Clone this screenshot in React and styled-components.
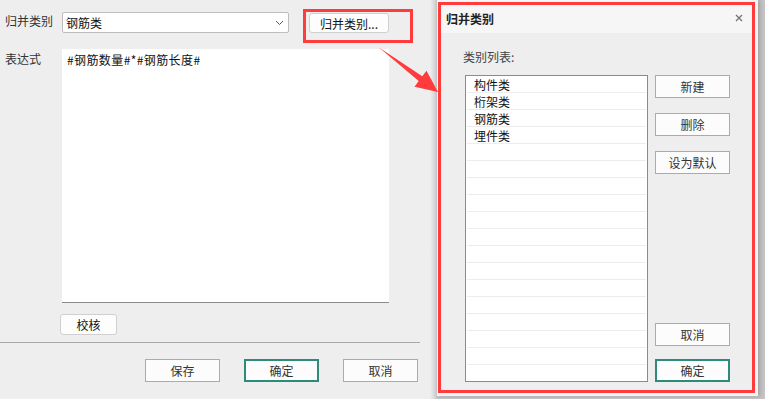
import styled, { createGlobalStyle } from "styled-components";

const GlobalStyle = createGlobalStyle`
  html, body {
    margin: 0;
    padding: 0;
    background: #eeeeee;
  }
  * {
    box-sizing: border-box;
  }
`;

const font = `"Noto Sans CJK SC", "Noto Sans", "Liberation Sans", sans-serif`;

const Page = styled.div`
  position: relative;
  width: 765px;
  height: 399px;
  overflow: hidden;
  display: flex;
  background: #eeeeee;
  font-family: ${font};
  font-size: 12px;
  color: #222;
`;

// Formulario da esquerda
const LeftPanel = styled.div`
  width: 430px;
  flex-shrink: 0;
  display: flex;
  flex-direction: column;
  padding-top: 9px;
`;

const TopRow = styled.div`
  display: flex;
  align-items: flex-start;
`;

const FieldLabel = styled.div`
  width: 62px;
  padding-left: 5px;
  line-height: 16px;
  margin-top: ${(p) => p.$top || 0}px;
  color: #333;
`;

const Select = styled.div`
  width: 227px;
  height: 21px;
  margin-top: 3px;
  background: #fff;
  border: 1px solid #bdbdbd;
  border-radius: 2px;
  display: flex;
  align-items: center;
  justify-content: space-between;
  padding: 0 4px 0 3px;
  color: #111;
`;

const Highlight = styled.div`
  border: 3px solid #ff3b3b;
  padding: ${(p) => p.$pad};
  margin-left: ${(p) => p.$left || 0}px;
`;

const SmallButton = styled.div`
  width: ${(p) => p.$w}px;
  height: ${(p) => p.$h}px;
  background: #fdfdfd;
  border: 1px solid #cfcfcf;
  border-radius: 3px;
  display: flex;
  align-items: center;
  justify-content: center;
  color: #111;
`;

const ExprRow = styled.div`
  display: flex;
  align-items: flex-start;
  margin-top: 6px;
`;

const ExprBox = styled.div`
  width: 327px;
  height: 254px;
  background: #fff;
  border-bottom: 1px solid #8a8a8a;
  padding: 3px 5px;
  line-height: 16px;
  letter-spacing: 0.4px;
  color: #111;
`;

const CheckRow = styled.div`
  padding-left: 60px;
  margin-top: 11px;
`;

const Separator = styled.div`
  width: 420px;
  height: 1px;
  background: #a8a8a8;
  margin-top: 7px;
`;

const FooterRow = styled.div`
  display: flex;
  gap: 24px;
  padding-left: 145px;
  margin-top: 16px;
`;

const FlatButton = styled.div`
  width: 75px;
  height: 23px;
  background: #fcfcfc;
  border: ${(p) => (p.$primary ? "2px solid #2e8b7b" : "1px solid #ababab")};
  display: flex;
  align-items: center;
  justify-content: center;
  color: #333;
  flex-shrink: 0;
`;

// Janela de dialogo
const DialogArea = styled.div`
  flex: 1;
  padding-left: 7px;
  background: linear-gradient(to right, #eeeeee 0px, #d4d4d4 5px, #c4c4c4 7px);
`;

const Dialog = styled.div`
  width: 321px;
  height: 396px;
  background: #f4f4f4;
  padding: 2px 3px 0 1px;
  box-shadow: 2px 0 4px rgba(0, 0, 0, 0.18);
`;

const DialogFrame = styled.div`
  height: 391px;
  border: 3px solid #ff3b3b;
  display: flex;
  flex-direction: column;
`;

const TitleBar = styled.div`
  height: 28px;
  flex-shrink: 0;
  background: #f6f6f6;
  display: flex;
  align-items: center;
  justify-content: space-between;
  padding: 0 9px 2px 5px;
`;

const Title = styled.div`
  font-weight: bold;
  color: #222;
`;

const DialogBody = styled.div`
  flex: 1;
  background: #eeeeee;
  padding: 16px 0 0 22px;
  display: flex;
  flex-direction: column;
`;

const ListLabel = styled.div`
  line-height: 16px;
  color: #444;
`;

const ListArea = styled.div`
  display: flex;
  gap: 7px;
  margin-top: 10px;
  padding-left: 2px;
`;

const ListBox = styled.div`
  width: 183px;
  height: 307px;
  background: #fff;
  border: 1px solid #8a8a90;
  overflow: hidden;
  padding: 0 1px;
`;

const ListRow = styled.div`
  height: 17px;
  border-bottom: 1px solid #ededed;
  padding-left: 7px;
  line-height: 17px;
  color: #111;
`;

const SideButtons = styled.div`
  display: flex;
  flex-direction: column;
  height: 307px;
`;

const SideGroup = styled.div`
  display: flex;
  flex-direction: column;
  gap: ${(p) => p.$gap}px;
  margin-top: ${(p) => (p.$bottom ? "auto" : "0")};
`;

const ArrowLayer = styled.svg`
  position: absolute;
  left: 0;
  top: 0;
  pointer-events: none;
`;

const Chevron = () => (
  <svg width="9" height="6" viewBox="0 0 9 6">
    <path d="M1 1 L4.5 4.5 L8 1" fill="none" stroke="#555" strokeWidth="1" />
  </svg>
);

const CloseIcon = () => (
  <svg width="8" height="8" viewBox="0 0 8 8">
    <path d="M1 1 L7 7 M7 1 L1 7" stroke="#777" strokeWidth="1.4" />
  </svg>
);

const categories = ["构件类", "桁架类", "钢筋类", "埋件类"];

function App() {
  const rows = Array.from({ length: 18 }, (_, i) => categories[i] || "");

  return (
    <>
      <GlobalStyle />
      <Page>
        <LeftPanel>
          <TopRow>
            <FieldLabel $top={4}>归并类别</FieldLabel>
            <Select>
              <span>钢筋类</span>
              <Chevron />
            </Select>
            <Highlight $left={14} $pad="1px 21px 7px 3px">
              <SmallButton $w={80} $h={20}>归并类别...</SmallButton>
            </Highlight>
          </TopRow>

          <ExprRow>
            <FieldLabel $top={2}>表达式</FieldLabel>
            <ExprBox>#钢筋数量#*#钢筋长度#</ExprBox>
          </ExprRow>

          <CheckRow>
            <SmallButton $w={57} $h={21}>校核</SmallButton>
          </CheckRow>

          <Separator />

          <FooterRow>
            <FlatButton>保存</FlatButton>
            <FlatButton $primary>确定</FlatButton>
            <FlatButton>取消</FlatButton>
          </FooterRow>
        </LeftPanel>

        <DialogArea>
          <Dialog>
            <DialogFrame>
              <TitleBar>
                <Title>归并类别</Title>
                <CloseIcon />
              </TitleBar>
              <DialogBody>
                <ListLabel>类别列表:</ListLabel>
                <ListArea>
                  <ListBox>
                    {rows.map((name, i) => (
                      <ListRow key={i}>{name}</ListRow>
                    ))}
                  </ListBox>
                  <SideButtons>
                    <SideGroup $gap={15}>
                      <FlatButton>新建</FlatButton>
                      <FlatButton>删除</FlatButton>
                      <FlatButton>设为默认</FlatButton>
                    </SideGroup>
                    <SideGroup $bottom $gap={13}>
                      <FlatButton>取消</FlatButton>
                      <FlatButton $primary>确定</FlatButton>
                    </SideGroup>
                  </SideButtons>
                </ListArea>
              </DialogBody>
            </DialogFrame>
          </Dialog>
        </DialogArea>

        <ArrowLayer width="765" height="399" viewBox="0 0 765 399">
          <polygon
            points="379,47.5 422.3,76.3 426.5,70.7 438,92 414.5,86.7 418.7,81.1"
            fill="#ff3b3b"
          />
        </ArrowLayer>
      </Page>
    </>
  );
}

export default App;
